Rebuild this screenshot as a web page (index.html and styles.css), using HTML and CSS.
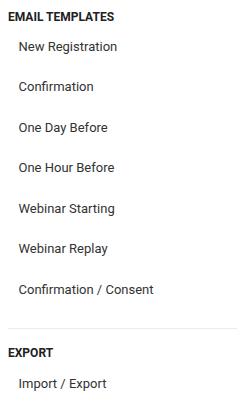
FILE: index.html
```html
<!DOCTYPE html>
<html>
<head>
<meta charset="utf-8">
<link rel="stylesheet" href="styles.css">
</head>
<body>
<nav class="sidebar">
  <div class="section">
    <h3 class="heading">EMAIL TEMPLATES</h3>
    <ul class="list">
      <li class="item">New Registration</li>
      <li class="item">Confirmation</li>
      <li class="item">One Day Before</li>
      <li class="item">One Hour Before</li>
      <li class="item">Webinar Starting</li>
      <li class="item">Webinar Replay</li>
      <li class="item">Confirmation / Consent</li>
    </ul>
  </div>
  <hr class="divider">
  <div class="section">
    <h3 class="heading heading-export">EXPORT</h3>
    <ul class="list list-export">
      <li class="item">Import / Export</li>
    </ul>
  </div>
</nav>
</body>
</html>
```

FILE: styles.css
```css
html, body {
  margin: 0;
  padding: 0;
  background: #fff;
}
body {
  font-family: Roboto, "Liberation Sans", sans-serif;
  width: 245px;
}
.sidebar {
  padding-top: 8.6px;
}
.heading {
  margin: 0 8px;
  font-size: 12px;
  line-height: 16px;
  font-weight: 700;
  color: #212121;
}
.list {
  list-style: none;
  margin: 2.1px 0 0;
  padding: 0;
}
.list-export {
  margin-top: 2.9px;
}
.item {
  padding-left: 18.5px;
  font-size: 13px;
  line-height: 40.55px;
  color: #333;
}
.divider {
  border: 0;
  height: 1px;
  background: #ebebeb;
  margin: 17.6px 8px 16.2px;
}
```
